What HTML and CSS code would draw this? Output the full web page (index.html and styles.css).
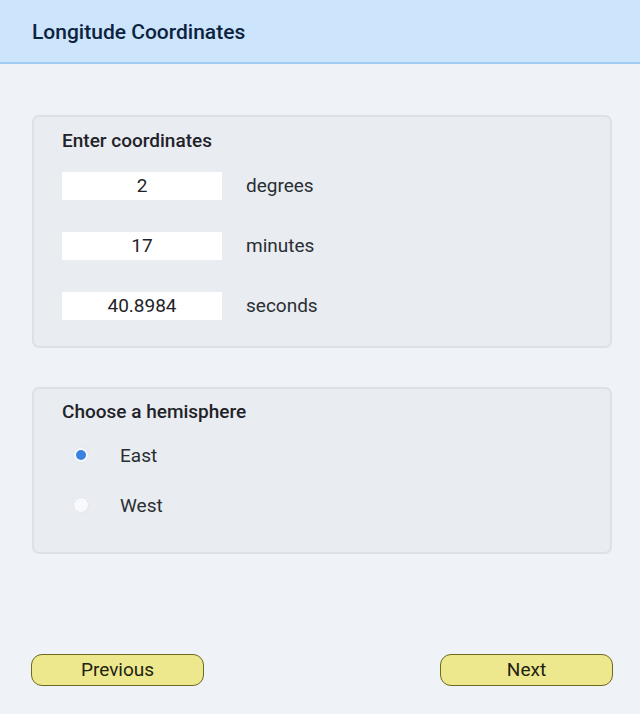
FILE: index.html
```html
<!DOCTYPE html>
<html lang="en">
<head>
<meta charset="utf-8">
<title>Longitude Coordinates</title>
<link rel="stylesheet" href="styles.css">
</head>
<body>
<header class="topbar">
  <h1 class="title">Longitude Coordinates</h1>
</header>
<main class="content">
  <section class="card card-coords">
    <h2 class="card-title">Enter coordinates</h2>
    <div class="coord-rows">
      <div class="coord-row">
        <input class="coord-input" type="text" value="2">
        <span class="coord-label">degrees</span>
      </div>
      <div class="coord-row">
        <input class="coord-input" type="text" value="17">
        <span class="coord-label">minutes</span>
      </div>
      <div class="coord-row">
        <input class="coord-input" type="text" value="40.8984">
        <span class="coord-label">seconds</span>
      </div>
    </div>
  </section>
  <section class="card card-hemi">
    <h2 class="card-title">Choose a hemisphere</h2>
    <div class="radio-rows">
      <label class="radio-row">
        <span class="radio checked"></span>
        <span class="radio-label">East</span>
      </label>
      <label class="radio-row">
        <span class="radio"></span>
        <span class="radio-label">West</span>
      </label>
    </div>
  </section>
</main>
<footer class="nav">
  <button class="nav-btn" type="button">Previous</button>
  <button class="nav-btn" type="button">Next</button>
</footer>
</body>
</html>
```

FILE: styles.css
```css
* { box-sizing: border-box; }
html, body { margin: 0; padding: 0; }
body {
  width: 640px;
  height: 714px;
  background: #eff3f7;
  font-family: Roboto, "Liberation Sans", sans-serif;
  color: #1f2328;
  display: flex;
  flex-direction: column;
}
.topbar {
  height: 64px;
  background: #cde4fd;
  border-bottom: 2px solid #a2cbf2;
  display: flex;
  align-items: center;
  padding: 0 32px;
}
.title {
  margin: 0;
  font-size: 21px;
  font-weight: 500;
  color: #0c2340;
  line-height: 24px;
  position: relative;
  top: 1px;
}
.content {
  padding: 51px 28px 0 32px;
  display: flex;
  flex-direction: column;
  gap: 39px;
}
.card {
  background: #e9ecf1;
  border: 2px solid #dde1e6;
  border-radius: 7px;
  padding: 0 28px;
}
.card-coords { padding-top: 12px; padding-bottom: 26px; }
.card-hemi { padding-top: 11px; padding-bottom: 32px; }
.card-title {
  margin: 0;
  font-size: 19px;
  font-weight: 500;
  line-height: 24px;
  color: #1f2328;
}
.coord-rows {
  margin-top: 19px;
  display: flex;
  flex-direction: column;
  gap: 32px;
}
.coord-row {
  display: flex;
  align-items: center;
  gap: 24px;
  height: 28px;
}
.coord-input {
  width: 160px;
  height: 28px;
  border: none;
  background: #ffffff;
  text-align: center;
  font-family: inherit;
  font-size: 19px;
  color: #1f2328;
  padding: 0 0 2px;
  outline: none;
}
.coord-label {
  font-size: 19px;
  color: #2a2e33;
  position: relative;
  top: -1px;
}
.radio-rows {
  margin-top: 16px;
  display: flex;
  flex-direction: column;
  gap: 20px;
}
.radio-row {
  display: flex;
  align-items: center;
  height: 30px;
  padding-left: 11px;
  gap: 31px;
}
.radio {
  width: 16px;
  height: 16px;
  border-radius: 50%;
  background: #f8f9fd;
  border: 1px solid #e4e6ee;
  display: flex;
  align-items: center;
  justify-content: center;
}
.radio.checked::after {
  content: "";
  width: 10px;
  height: 10px;
  border-radius: 50%;
  background: #3b82e0;
}
.radio-label {
  font-size: 19px;
  color: #2a2e33;
}
.nav {
  margin-top: auto;
  padding: 0 27px 28px 31px;
  display: flex;
  justify-content: space-between;
}
.nav-btn {
  width: 173px;
  height: 32px;
  background: #ede88e;
  border: 1px solid #6d691f;
  border-radius: 11px;
  font-family: inherit;
  font-size: 19px;
  color: #222211;
  padding: 0 0 2px;
  cursor: pointer;
}
```
